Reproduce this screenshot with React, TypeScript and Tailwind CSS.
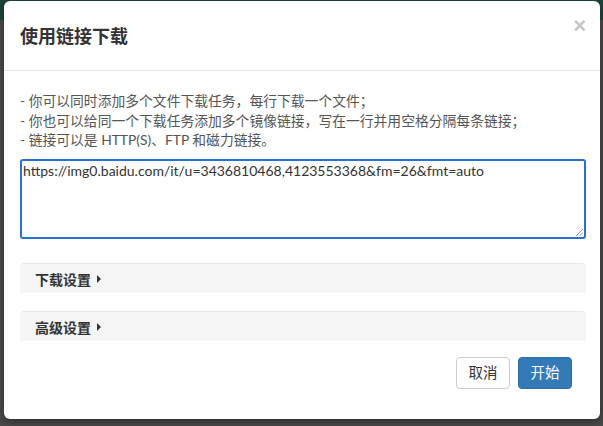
export default function App() {
  return (
    <div className="relative h-[426px] w-[603px] overflow-hidden bg-[#4a4a4a] font-['Lato','Noto_Sans_CJK_SC',sans-serif]">
      <div className="h-[20px] bg-[#1c463c]" />
      <div className="absolute left-[4px] top-[1px] flex h-[418px] w-[596px] flex-col rounded-[6px] bg-white shadow-[0_3px_9px_rgba(0,0,0,0.4)]">
        <div className="flex h-[70px] shrink-0 items-start justify-between border-b border-[#e5e5e5] pl-[16px] pr-[14px]">
          <div className="mt-[22px] text-[18px] font-bold leading-[26px] text-[#333]">使用链接下载</div>
          <div className="mt-[12px] text-[22px] font-bold leading-[26px] text-[#c6c6c6] font-['Liberation_Sans',sans-serif]">×</div>
        </div>
        <div className="flex flex-col pl-[16px] pr-[14px] pt-[20px]">
          <div className="text-[13.8px] leading-[19.5px] text-[#555]">
            <div>- 你可以同时添加多个文件下载任务，每行下载一个文件；</div>
            <div>- 你也可以给同一个下载任务添加多个镜像链接，写在一行并用空格分隔每条链接；</div>
            <div>- 链接可以是 HTTP(S)、FTP 和磁力链接。</div>
          </div>
          <div className="relative mt-[9.5px] h-[80px] w-[566px] rounded-[3px] border-2 border-[#2b6fd2] px-[1px] text-[14px] leading-[20px] text-[#333]">
            https://img0.baidu.com/it/u=3436810468,4123553368&amp;fm=26&amp;fmt=auto
            <svg className="absolute bottom-[1px] right-[1px]" width="8" height="8" viewBox="0 0 8 8">
              <line x1="1" y1="8" x2="8" y2="1" stroke="#999" strokeWidth="1" />
              <line x1="4.5" y1="8" x2="8" y2="4.5" stroke="#999" strokeWidth="1" />
            </svg>
          </div>
          <div className="mt-[24px] flex h-[30px] w-[566px] items-center gap-[6px] rounded-t-[4px] border-t border-[#e9e9e9] bg-[#f5f5f5] pt-[1px] pl-[15px] text-[14px] font-bold text-[#333]">
            <span>下载设置</span>
            <span className="h-0 w-0 border-y-[4px] border-l-[4px] border-y-transparent border-l-[#333]" />
          </div>
          <div className="mt-[18px] flex h-[30px] w-[566px] items-center gap-[6px] rounded-t-[4px] border-t border-[#e9e9e9] bg-[#f5f5f5] pt-[1px] pl-[15px] text-[14px] font-bold text-[#333]">
            <span>高级设置</span>
            <span className="h-0 w-0 border-y-[4px] border-l-[4px] border-y-transparent border-l-[#333]" />
          </div>
          <div className="mt-[16px] flex justify-end gap-[8px] pr-[14px]">
            <button className="flex h-[32px] w-[54px] items-center justify-center rounded-[4px] border border-[#ccc] bg-white text-[14.5px] text-[#333]">取消</button>
            <button className="flex h-[32px] w-[54px] items-center justify-center rounded-[4px] border border-[#2e6da4] bg-[#337ab7] text-[14.5px] text-white">开始</button>
          </div>
        </div>
      </div>
    </div>
  );
}
